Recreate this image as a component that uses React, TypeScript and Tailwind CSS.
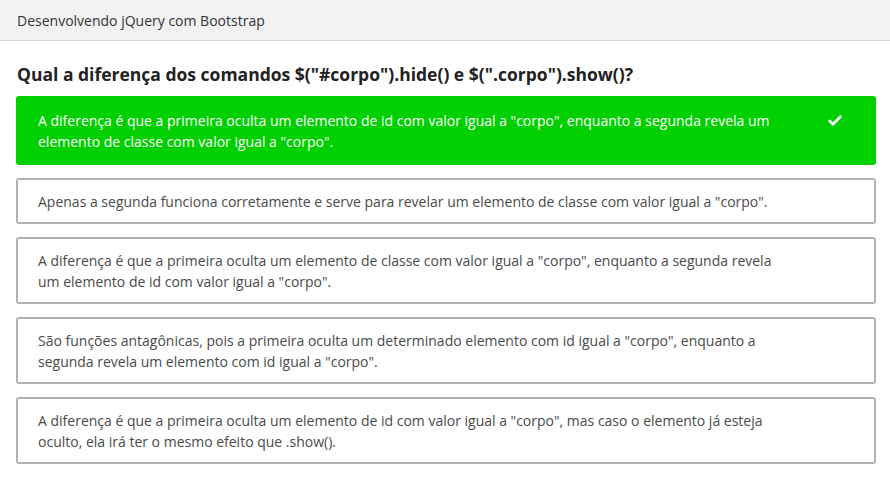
import React from 'react';

const options = [
  {
    text: 'A diferença é que a primeira oculta um elemento de id com valor igual a "corpo", enquanto a segunda revela um elemento de classe com valor igual a "corpo".',
    correct: true,
  },
  {
    text: 'Apenas a segunda funciona corretamente e serve para revelar um elemento de classe com valor igual a "corpo".',
    correct: false,
  },
  {
    text: 'A diferença é que a primeira oculta um elemento de classe com valor igual a "corpo", enquanto a segunda revela um elemento de id com valor igual a "corpo".',
    correct: false,
  },
  {
    text: 'São funções antagônicas, pois a primeira oculta um determinado elemento com id igual a "corpo", enquanto a segunda revela um elemento com id igual a "corpo".',
    correct: false,
  },
  {
    text: 'A diferença é que a primeira oculta um elemento de id com valor igual a "corpo", mas caso o elemento já esteja oculto, ela irá ter o mesmo efeito que .show().',
    correct: false,
  },
];

const App: React.FC = () => {
  return (
    <div className="min-h-screen bg-white font-['Open_Sans',sans-serif]">
      {/* Header */}
      <header className="h-[41px] bg-[#f2f2f2] border-b border-[#d4d4d4] flex items-center px-[17px]">
        <span className="text-[14px] text-[#333]">Desenvolvendo jQuery com Bootstrap</span>
      </header>

      <main className="px-[16px] pt-[21px]">
        <h1 className="text-[17.5px] font-bold text-[#222] leading-[24px] pl-[1px] mb-[10px]">
          Qual a diferença dos comandos $("#corpo").hide() e $(".corpo").show()?
        </h1>

        <div className="flex flex-col gap-[13px] w-[860px]">
          {options.map((opt, i) =>
            opt.correct ? (
              <div
                key={i}
                className="flex items-center rounded-[3px] border-2 border-[#00d000] bg-[#00d000] pl-[20px] pr-[32px] py-[11.5px]"
              >
                <p className="w-[745px] text-[14px] leading-[21px] font-medium text-white">{opt.text}</p>
                <svg className="ml-auto -mt-[21px]" width="14" height="11" viewBox="0 0 14 11">
                  <path d="M1.6 6 L5 9.2 L12.4 1.8" fill="none" stroke="white" strokeWidth="2.8" strokeLinecap="round" strokeLinejoin="round" />
                </svg>
              </div>
            ) : (
              <div
                key={i}
                className="flex items-center rounded-[3px] border-2 border-[#b4b4b4] bg-white pl-[20px] pr-[32px] py-[10.5px]"
              >
                <p className="w-[745px] text-[14px] leading-[21px] text-[#4a4a4a]">{opt.text}</p>
              </div>
            )
          )}
        </div>
      </main>
    </div>
  );
};

export default App;
